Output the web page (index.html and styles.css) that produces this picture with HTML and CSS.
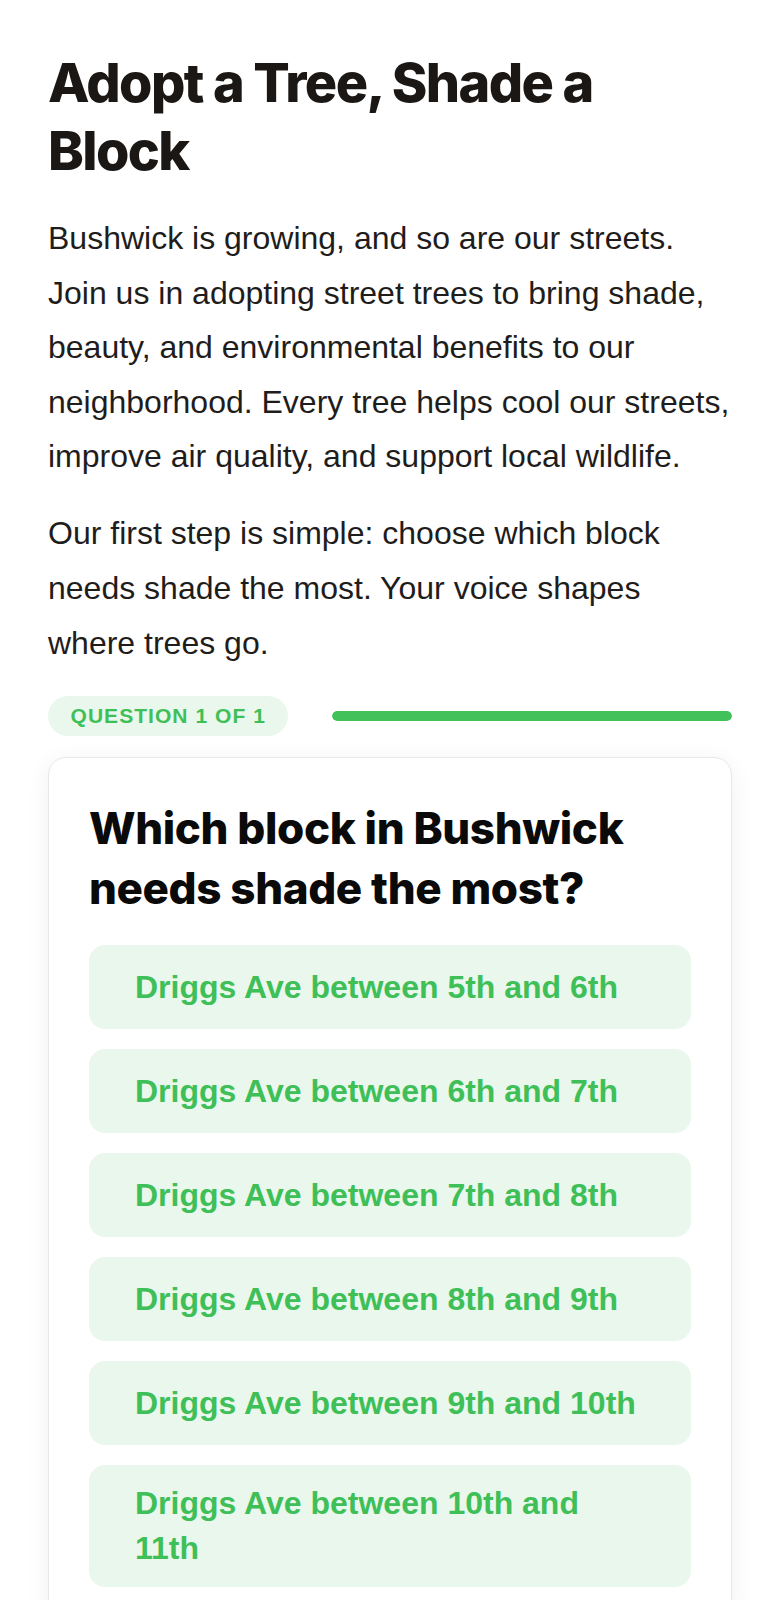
FILE: index.html
```html
<!DOCTYPE html>
<html lang="en">
<head>
<meta charset="utf-8">
<title>Adopt a Tree, Shade a Block</title>
<link rel="stylesheet" href="styles.css">
</head>
<body>
<main class="page">
  <h1 class="title">Adopt a Tree, Shade a Block</h1>
  <p class="lead">Bushwick is growing, and so are our streets. Join us in adopting street trees to bring shade, beauty, and environmental benefits to our neighborhood. Every tree helps cool our streets, improve air quality, and support local wildlife.</p>
  <p class="lead">Our first step is simple: choose which block needs shade the most. Your voice shapes where trees go.</p>

  <div class="progress-row">
    <span class="pill">QUESTION 1 OF 1</span>
    <div class="track"><div class="fill" style="width:100%"></div></div>
  </div>

  <section class="card">
    <h2 class="question">Which block in Bushwick needs shade the most?</h2>
    <div class="options">
      <button class="option">Driggs Ave between 5th and 6th</button>
      <button class="option">Driggs Ave between 6th and 7th</button>
      <button class="option">Driggs Ave between 7th and 8th</button>
      <button class="option">Driggs Ave between 8th and 9th</button>
      <button class="option">Driggs Ave between 9th and 10th</button>
      <button class="option">Driggs Ave between 10th and 11th</button>
    </div>
  </section>
</main>
</body>
</html>
```
FILE: styles.css
```css
html, body {
  margin: 0;
  padding: 0;
  background: #ffffff;
}

.page {
  padding: 49px 48px 40px;
  font-family: "Liberation Sans", Arial, sans-serif;
  color: #1f1d1b;
}

.title {
  margin: 0 0 26px;
  font-family: Inter, "Liberation Sans", sans-serif;
  font-weight: 800;
  font-size: 54px;
  line-height: 68px;
  letter-spacing: -1.6px;
  color: #1a1714;
}

.lead {
  margin: 0 0 22.5px;
  font-size: 32px;
  line-height: 54.6px;
  color: #1f1d1b;
}

.lead + .lead {
  margin-bottom: 26px;
}

.progress-row {
  display: flex;
  align-items: center;
  gap: 44px;
  margin-bottom: 21px;
}

.pill {
  flex: none;
  background: #eaf7ed;
  color: #3fbf57;
  font-weight: 700;
  font-size: 21px;
  letter-spacing: 1.05px;
  line-height: 22px;
  padding: 9px 22.5px;
  border-radius: 20px;
}

.track {
  flex: 1;
  height: 10px;
  border-radius: 5px;
  background: #e4f4e8;
  overflow: hidden;
}

.fill {
  height: 100%;
  background: #42c15a;
  border-radius: 5px;
}

.card {
  border: 1px solid #e8e8e8;
  border-radius: 18px;
  padding: 40px 40px 40px;
  background: #fff;
  box-shadow: 0 4px 24px rgba(0, 0, 0, 0.06);
}

.question {
  margin: 0 0 27px;
  font-family: Inter, "Liberation Sans", sans-serif;
  font-weight: 800;
  font-size: 44px;
  line-height: 60px;
  letter-spacing: -0.4px;
  color: #0a0a0a;
}

.options {
  display: flex;
  flex-direction: column;
  gap: 20px;
}

.option {
  display: flex;
  align-items: center;
  min-height: 84px;
  box-sizing: border-box;
  width: 100%;
  padding: 16px 46px;
  border: none;
  border-radius: 16px;
  background: #eaf7ed;
  color: #3fbf57;
  font-family: "Liberation Sans", Arial, sans-serif;
  font-weight: 700;
  font-size: 32px;
  line-height: 44.8px;
  text-align: left;
  cursor: pointer;
}
```
